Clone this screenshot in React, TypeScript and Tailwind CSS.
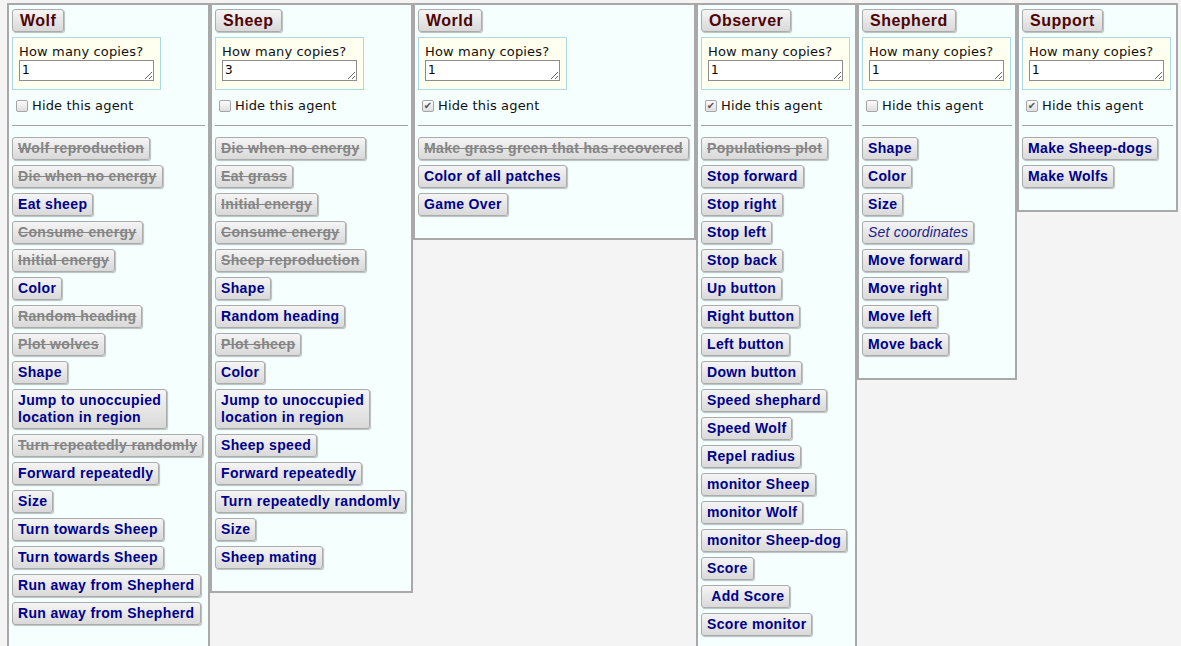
import React from 'react';

type Btn = { label: string; off?: boolean; italic?: boolean };

type Agent = {
  name: string;
  width: string;
  copies: string;
  hidden: boolean;
  buttons: Btn[];
};

const on = (label: string): Btn => ({ label });
const off = (label: string): Btn => ({ label, off: true });

const AGENTS: Agent[] = [
  {
    name: 'Wolf', width: 'w-[203px]', copies: '1', hidden: false,
    buttons: [
      off('Wolf reproduction'), off('Die when no energy'), on('Eat sheep'),
      off('Consume energy'), off('Initial energy'), on('Color'),
      off('Random heading'), off('Plot wolves'), on('Shape'),
      on('Jump to unoccupied\nlocation in region'), off('Turn repeatedly randomly'),
      on('Forward repeatedly'), on('Size'), on('Turn towards Sheep'),
      on('Turn towards Sheep'), on('Run away from Shepherd'), on('Run away from Shepherd'),
    ],
  },
  {
    name: 'Sheep', width: 'w-[203px]', copies: '3', hidden: false,
    buttons: [
      off('Die when no energy'), off('Eat grass'), off('Initial energy'),
      off('Consume energy'), off('Sheep reproduction'), on('Shape'),
      on('Random heading'), off('Plot sheep'), on('Color'),
      on('Jump to unoccupied\nlocation in region'), on('Sheep speed'),
      on('Forward repeatedly'), on('Turn repeatedly randomly'), on('Size'),
      on('Sheep mating'),
    ],
  },
  {
    name: 'World', width: 'w-[283px]', copies: '1', hidden: true,
    buttons: [off('Make grass green that has recovered'), on('Color of all patches'), on('Game Over')],
  },
  {
    name: 'Observer', width: 'w-[161px]', copies: '1', hidden: true,
    buttons: [
      off('Populations plot'), on('Stop forward'), on('Stop right'), on('Stop left'),
      on('Stop back'), on('Up button'), on('Right button'), on('Left button'),
      on('Down button'), on('Speed shephard'), on('Speed Wolf'), on('Repel radius'),
      on('monitor Sheep'), on('monitor Wolf'), on('monitor Sheep-dog'), on('Score'),
      on('\u00a0Add Score'), on('Score monitor'),
    ],
  },
  {
    name: 'Shepherd', width: 'w-[160px]', copies: '1', hidden: false,
    buttons: [
      on('Shape'), on('Color'), on('Size'), { label: 'Set coordinates', italic: true },
      on('Move forward'), on('Move right'), on('Move left'), on('Move back'),
    ],
  },
  {
    name: 'Support', width: 'w-[161px]', copies: '1', hidden: true,
    buttons: [on('Make Sheep-dogs'), on('Make Wolfs')],
  },
];

const btnBase =
  "rounded-[3px] border border-[#ababab] bg-gradient-to-b from-[#f5f5f5] to-[#d9d9d9] shadow-[1px_1px_1px_rgba(0,0,0,0.25)] font-['Liberation_Sans',Arial,sans-serif] text-left";

// ── Fake old-style checkbox ───────────────────────────────────────
function CheckBox({ checked }: { checked: boolean }) {
  return (
    <span className="flex h-[12px] w-[12px] items-center justify-center rounded-[2px] border border-[#a6a6a6] bg-gradient-to-b from-[#fcfcfc] to-[#dedede] text-[10px] leading-none text-[#555]">
      {checked ? '✔' : ''}
    </span>
  );
}

function AgentPanel({ agent }: { agent: Agent }) {
  return (
    <div className={`${agent.width} shrink-0 self-start border-2 border-[#a9a9a9] bg-[#f5fffd] px-[3px] pt-[4px] pb-[22px]`}>
      {/* Title */}
      <button className={`${btnBase} block px-[7px] py-[1px] text-[16px] font-bold leading-[19px] tracking-[0.5px] text-[#4e0404]`}>
        {agent.name}
      </button>

      {/* Copies */}
      <div className="mt-[5px] w-[149px] border border-[#add8e6] bg-[#fffff0] px-[6px] pt-[6px] pb-[8px] font-['DejaVu_Sans',Verdana,sans-serif] text-[13px] tracking-[0.15px] text-[#111]">
        <div className="leading-[16px]">How many copies?</div>
        <textarea
          readOnly
          defaultValue={agent.copies}
          className="block h-[21px] w-[135px] resize-y overflow-hidden border border-[#8c8c8c] bg-white px-[2px] py-0 font-['DejaVu_Sans',Verdana,sans-serif] text-[12px] leading-[19px] text-black outline-none"
        />
      </div>

      {/* Hide checkbox */}
      <div className="mt-[8px] flex h-[15px] items-center gap-[4px] pl-[4px] font-['DejaVu_Sans',Verdana,sans-serif] text-[13px] tracking-[0.15px] text-[#111]">
        <CheckBox checked={agent.hidden} />
        <span className="leading-[15px]">Hide this agent</span>
      </div>

      <div className="mt-[12px] h-px bg-[#a3a3a3]" />

      {/* Behaviour buttons */}
      <div className="mt-[11px] flex flex-col items-start gap-[5px]">
        {agent.buttons.map((b, i) => (
          <button
            key={i}
            className={`${btnBase} whitespace-pre px-[5px] py-[2px] text-[14px] leading-[17px] ${
              b.off
                ? 'font-bold tracking-[0.35px] text-[#858585] line-through'
                : b.italic
                ? 'font-normal italic tracking-[0.2px] text-[#1c1c8c]'
                : 'font-bold tracking-[0.35px] text-[#00008b]'
            }`}
          >
            {b.label}
          </button>
        ))}
      </div>
    </div>
  );
}

export default function App() {
  return (
    <div className="h-[646px] w-[1181px] overflow-hidden bg-[#f4f4f4] pl-[7px] pt-[3px]">
      <div className="flex items-start">
        {AGENTS.map(a => (
          <AgentPanel key={a.name} agent={a} />
        ))}
      </div>
    </div>
  );
}
